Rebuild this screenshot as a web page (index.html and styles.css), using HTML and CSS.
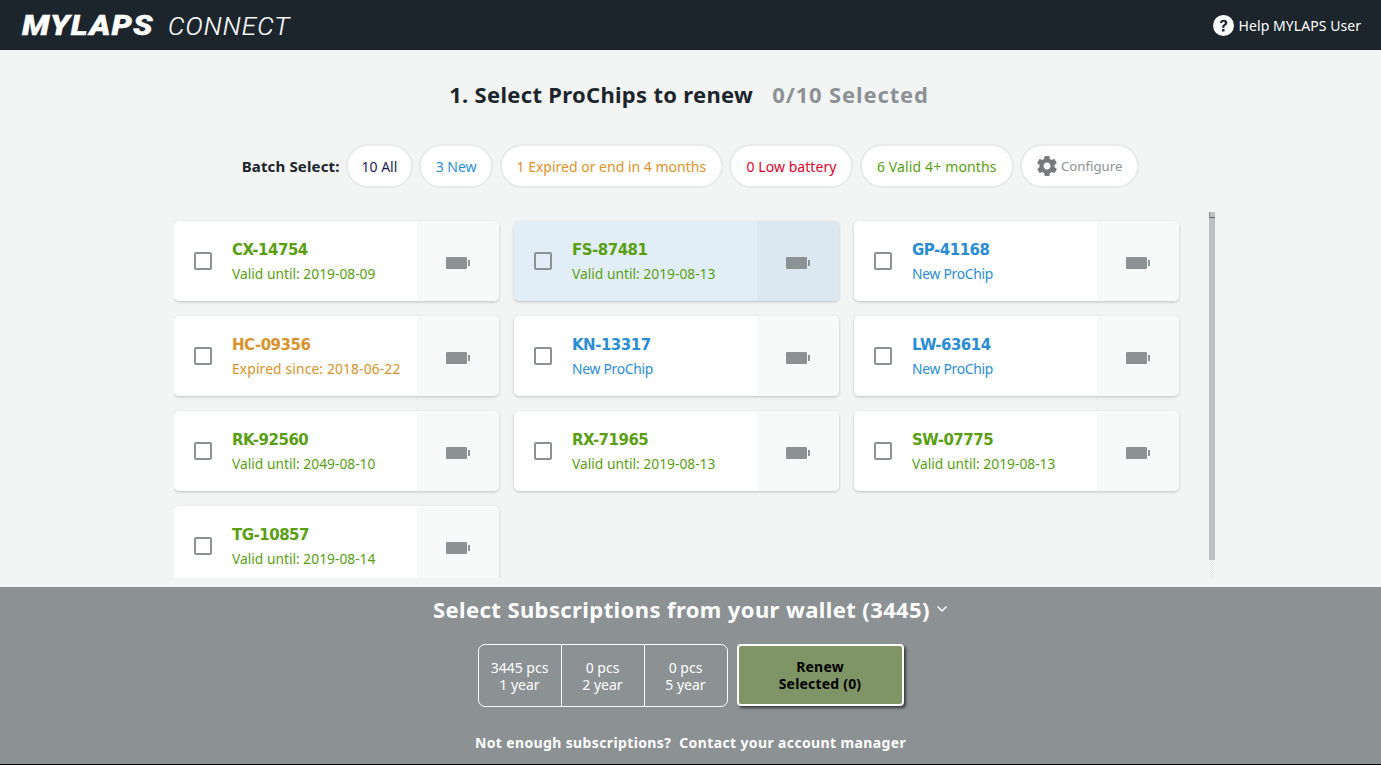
FILE: index.html
```html
<!DOCTYPE html>
<html lang="en">
<head>
<meta charset="utf-8">
<title>MYLAPS Connect</title>
<link rel="stylesheet" href="styles.css">
</head>
<body>
<div class="app">
  <header class="topbar">
    <div class="logo"><span class="logo-main"><span class="logo-wide">MYLAPS</span></span><span class="logo-sub">CONNECT</span></div>
    <div class="help">
      <svg class="help-icon" viewBox="0 0 20 20" width="21" height="21"><circle cx="10" cy="10" r="10" fill="#fff"/><path d="M6.600 7.600C6.800 5.600 8.200 4.500 10.200 4.500c2 0 3.400 1.200 3.400 2.900 0 1.300-.7 2-1.700 2.700-.8.500-1 .9-1 1.700v.4H8.700v-.6c0-1.200.4-1.900 1.400-2.600.8-.5 1.200-.9 1.200-1.500 0-.7-.5-1.100-1.200-1.100-.8 0-1.300.5-1.400 1.300z" fill="#1c252c"/><rect x="8.600" y="13.400" width="2.400" height="2.400" rx=".4" fill="#1c252c"/></svg>
      <span class="help-text">Help MYLAPS User</span>
    </div>
  </header>

  <main class="content">
    <h1 class="title">1. Select ProChips to renew <span class="title-count">0/10 Selected</span></h1>
    <div class="batch">
      <span class="batch-label">Batch Select:</span>
      <span class="pill pill-all">10 All</span>
      <span class="pill pill-new">3 New</span>
      <span class="pill pill-expired">1 Expired or end in 4 months</span>
      <span class="pill pill-low">0 Low battery</span>
      <span class="pill pill-valid">6 Valid 4+ months</span>
      <span class="pill pill-config">
        <svg class="gear" viewBox="0 0 24 24" width="24" height="24"><path fill="#77797c" d="M19.400 13c.05-.33.100-.66.100-1s-.05-.67-.100-1l2.100-1.650c.2-.15.25-.42.120-.64l-2-3.460c-.12-.22-.39-.3-.61-.22l-2.490 1c-.52-.4-1.080-.73-1.690-.98l-.38-2.650C14.460 2.180 14.250 2 14 2h-4c-.25 0-.46.18-.49.420l-.38 2.650c-.61.25-1.170.59-1.690.98l-2.490-1c-.23-.09-.49 0-.61.220l-2 3.460c-.13.22-.07.49.120.640L4.600 11c-.05.33-.1.67-.1 1s.05.67.1 1l-2.100 1.650c-.2.15-.25.42-.12.64l2 3.460c.12.22.39.3.61.22l2.490-1c.52.4 1.080.73 1.690.98l.38 2.650c.03.24.24.42.49.42h4c.25 0 .46-.18.49-.42l.38-2.650c.61-.25 1.170-.59 1.690-.98l2.490 1c.23.09.49 0 .61-.22l2-3.460c.12-.22.07-.49-.12-.64zM12 15.500c-1.930 0-3.500-1.570-3.500-3.500s1.570-3.500 3.500-3.500 3.500 1.570 3.500 3.500-1.570 3.500-3.500 3.500z"/></svg>
        Configure
      </span>
    </div>

    <div class="chips-area">
      <div class="chips-clip">
        <div class="chips">
          <article class="chip valid"><span class="check"></span><div class="info"><div class="code">CX-14754</div><div class="status">Valid until: 2019-08-09</div></div><div class="battery"><span class="batt-body"></span><span class="batt-tip"></span></div></article>
          <article class="chip valid hover"><span class="check"></span><div class="info"><div class="code">FS-87481</div><div class="status">Valid until: 2019-08-13</div></div><div class="battery"><span class="batt-body"></span><span class="batt-tip"></span></div></article>
          <article class="chip new"><span class="check"></span><div class="info"><div class="code">GP-41168</div><div class="status">New ProChip</div></div><div class="battery"><span class="batt-body"></span><span class="batt-tip"></span></div></article>
          <article class="chip expired"><span class="check"></span><div class="info"><div class="code">HC-09356</div><div class="status">Expired since: 2018-06-22</div></div><div class="battery"><span class="batt-body"></span><span class="batt-tip"></span></div></article>
          <article class="chip new"><span class="check"></span><div class="info"><div class="code">KN-13317</div><div class="status">New ProChip</div></div><div class="battery"><span class="batt-body"></span><span class="batt-tip"></span></div></article>
          <article class="chip new"><span class="check"></span><div class="info"><div class="code">LW-63614</div><div class="status">New ProChip</div></div><div class="battery"><span class="batt-body"></span><span class="batt-tip"></span></div></article>
          <article class="chip valid"><span class="check"></span><div class="info"><div class="code">RK-92560</div><div class="status">Valid until: 2049-08-10</div></div><div class="battery"><span class="batt-body"></span><span class="batt-tip"></span></div></article>
          <article class="chip valid"><span class="check"></span><div class="info"><div class="code">RX-71965</div><div class="status">Valid until: 2019-08-13</div></div><div class="battery"><span class="batt-body"></span><span class="batt-tip"></span></div></article>
          <article class="chip valid"><span class="check"></span><div class="info"><div class="code">SW-07775</div><div class="status">Valid until: 2019-08-13</div></div><div class="battery"><span class="batt-body"></span><span class="batt-tip"></span></div></article>
          <article class="chip valid"><span class="check"></span><div class="info"><div class="code">TG-10857</div><div class="status">Valid until: 2019-08-14</div></div><div class="battery"><span class="batt-body"></span><span class="batt-tip"></span></div></article>
        </div>
      </div>
      <div class="scrollbar"><span class="scroll-cap"></span><span class="scroll-thumb"></span><span class="scroll-track"></span></div>
    </div>
  </main>

  <footer class="wallet">
    <h2 class="wallet-title">Select Subscriptions from your wallet (3445)
      <svg class="chev" viewBox="0 0 12 8" width="12" height="8"><path d="M1.500 1.500 6 6l4.500-4.500" fill="none" stroke="#fff" stroke-width="1.500"/></svg>
    </h2>
    <div class="wallet-row">
      <div class="subs">
        <div class="sub"><div>3445 pcs</div><div>1 year</div></div>
        <div class="sub"><div>0 pcs</div><div>2 year</div></div>
        <div class="sub"><div>0 pcs</div><div>5 year</div></div>
      </div>
      <button class="renew">Renew<br>Selected (0)</button>
    </div>
    <p class="wallet-note">Not enough subscriptions?&nbsp; Contact your account manager</p>
  </footer>
</div>
</body>
</html>
```
FILE: styles.css
```css
* { box-sizing: border-box; }
html, body { margin: 0; height: 100%; }
body { font-family: "Noto Sans", "Open Sans", sans-serif; font-size: 14px; background: #f3f5f4; color: #1c252c; overflow: hidden; }
.app { display: flex; flex-direction: column; height: 765px; }

.topbar { height: 50px; flex: none; background: #1c252c; display: flex; align-items: center; justify-content: space-between; padding: 0 20px 0 22px; color: #fff; }
.logo { display: flex; align-items: baseline; font-family: Roboto, "Liberation Sans", sans-serif; font-style: italic; margin-top: 2px; }
.logo-main { font-weight: 900; font-size: 27px; width: 146px; }
.logo-wide { display: inline-block; transform: scaleX(1.19); transform-origin: left center; letter-spacing: 1px; -webkit-text-stroke: .4px #fff; }
.logo-sub { font-weight: 300; font-size: 26px; letter-spacing: 1.100px; -webkit-text-stroke: .2px #fff; }
.help { display: flex; align-items: center; gap: 5px; font-size: 14px; }
.help-icon { display: block; }
.help-text { letter-spacing: .06px; }

.content { flex: none; height: 537px; display: flex; flex-direction: column; }
.title { margin: 27px 0 0; height: 34px; padding-right: 3px; text-align: center; font-size: 22px; line-height: 34px; font-weight: 700; color: #1c252c; letter-spacing: .3px; }
.title-count { color: #8c9194; margin-left: 13px; letter-spacing: .85px; }

.batch { display: flex; justify-content: center; align-items: center; gap: 6.400px; margin-top: 33px; height: 44px; }
.batch-label { font-weight: 700; font-size: 15px; letter-spacing: .15px; }
.pill { height: 44px; display: inline-flex; align-items: center; gap: 2px; padding: 0 14px; background: #fff; border: 2px solid #e8eaea; border-radius: 22px; font-size: 14px; white-space: nowrap; }
.pill-all { color: #1c1c50; padding: 0 13.500px; }
.pill-new { color: #2a8dd4; padding: 0 14.500px; }
.pill-expired { color: #e0922c; padding: 0 15px; }
.pill-low { color: #e5002b; padding: 0 15px; letter-spacing: .06px; }
.pill-valid { color: #5a9e14; padding: 0 15px; letter-spacing: .14px; }
.pill-config { color: #8c9194; font-size: 13.200px; padding: 0 15px 0 13px; }
.gear { display: block; }

.chips-area { display: flex; margin-top: 24px; height: 366px; padding-left: 174px; }
.chips-clip { width: 1035px; height: 366px; overflow: hidden; padding-top: 9px; }
.chips { display: grid; grid-template-columns: repeat(3, 325px); grid-auto-rows: 80px; gap: 15px; }
.chip { display: flex; align-items: center; background: #fff; border-radius: 5px; box-shadow: 0 1px 3px rgba(0,0,0,.22); overflow: hidden; }
.chip.hover { background: #e2eef7; }
.check { flex: none; width: 18px; height: 18px; margin-left: 20px; border: 2px solid #8c9194; border-radius: 2px; }
.info { flex: 1; padding: 2px 0 0 20px; min-width: 0; }
.code { font-family: "DejaVu Sans", sans-serif; font-weight: 700; font-size: 15px; letter-spacing: -.5px; line-height: 20px; }
.status { font-size: 13.800px; line-height: 20px; margin-top: 4px; }
.valid .code, .valid .status { color: #5a9e14; }
.new .code, .new .status { color: #2a8dd4; }
.new .status { letter-spacing: -.25px; }
.expired .code, .expired .status { color: #d9922c; }
.expired .status { letter-spacing: .15px; }
.battery { flex: none; width: 82px; height: 80px; background: #f8f9f9; display: flex; align-items: center; justify-content: center; gap: 1px; padding-top: 3px; }
.hover .battery { background: #dbe8f2; }
.batt-body { width: 21px; height: 12px; background: #8c9194; border-radius: 1px; }
.batt-tip { width: 2px; height: 6px; background: #8c9194; }

.scrollbar { flex: none; width: 6px; height: 366px; display: flex; flex-direction: column; }
.scroll-cap { height: 6px; background: #c0c2c2; border-left: 1px solid #888; border-bottom: 1px solid #666; flex: none; }
.scroll-thumb { height: 342px; background: #bcbfbf; flex: none; }
.scroll-track { height: 18px; flex: none; background: repeating-conic-gradient(#fff 0 25%, #e4e6e6 0 50%) 0 0 / 2px 2px; }

.wallet { flex: 1; background: #8c9194; border-bottom: 1px solid #000; color: #fff; display: flex; flex-direction: column; align-items: center; }
.wallet-title { margin: 8px 0 0; font-size: 22px; letter-spacing: .4px; line-height: 28px; font-weight: 700; display: flex; align-items: center; gap: 6px; }
.wallet-row { display: flex; gap: 9px; margin-top: 21px; }
.subs { display: flex; width: 250px; height: 63px; border: 1px solid #fff; border-radius: 7px; }
.sub { flex: 1; display: flex; flex-direction: column; justify-content: center; align-items: center; font-size: 14px; line-height: 17px; }
.sub + .sub { border-left: 1px solid #fff; }
.renew { width: 167px; height: 62px; padding: 0; background: #7f9565; border: 2px solid #fff; border-radius: 4px; box-shadow: 2px 2px 3px rgba(0,0,0,.6); font: 700 14px/17px "Noto Sans", sans-serif; letter-spacing: .2px; color: #000; }
.wallet-note { margin: 26px 0 0; font-size: 14px; letter-spacing: .37px; line-height: 20px; font-weight: 700; }
```
